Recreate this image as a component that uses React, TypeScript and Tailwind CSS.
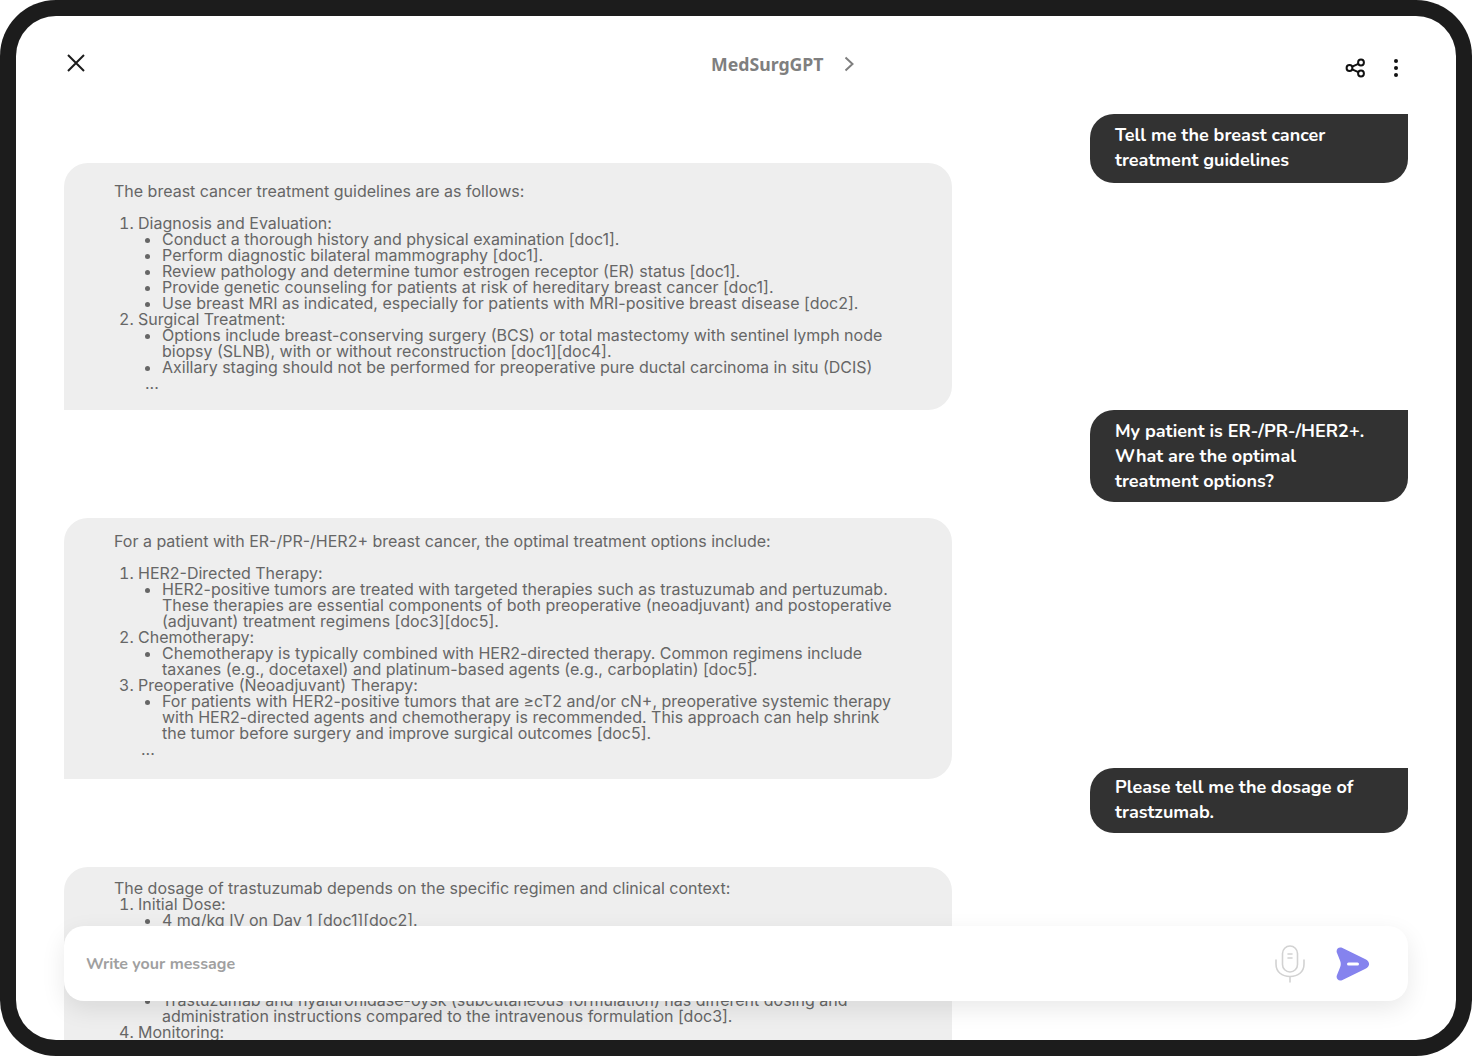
import React from "react";

const UserBubble = ({ children, className }: { children: React.ReactNode; className?: string }) => (
  <div
    className={`ml-auto w-[318px] rounded-[24px] rounded-tr-none bg-[#323232] px-[25px] font-['Nunito','Open_Sans',sans-serif] text-[18px] leading-[25px] font-bold text-white ${className ?? ""}`}
  >
    {children}
  </div>
);

const BotBubble = ({ children, className }: { children: React.ReactNode; className?: string }) => (
  <div
    className={`w-[888px] rounded-[24px] rounded-bl-none bg-[#eeeeee] px-[50px] font-['Inter',sans-serif] text-[16px] leading-4 text-[#666666] ${className ?? ""}`}
  >
    {children}
  </div>
);

const Ol = ({ children, start }: { children: React.ReactNode; start?: number }) => (
  <ol start={start} className="list-decimal pl-6">
    {children}
  </ol>
);

const Ul = ({ children }: { children: React.ReactNode }) => <ul className="list-disc pl-6">{children}</ul>;

export default function App() {
  return (
    <div className="h-[1056px] w-[1472px] overflow-hidden rounded-[56px] bg-[#1c1c1c] p-4">
      <div className="relative h-full w-full overflow-hidden rounded-[40px] bg-white">
        <header className="flex h-[98px] items-start pt-[38px] pr-[57px] pl-[51px]">
          <svg width="18" height="18" viewBox="0 0 18 18" fill="none" stroke="#1c1c1c" strokeWidth="2" className="shrink-0">
            <path d="M1 1l16 16M17 1L1 17" />
          </svg>
          <div className="ml-[626px] flex h-5 items-center font-['Noto_Sans',sans-serif] text-[17.7px] font-bold text-[#7f7f7f]">
            MedSurgGPT
            <svg width="10" height="16" viewBox="0 0 10 16" fill="none" stroke="#7f7f7f" strokeWidth="2" className="ml-[20px]">
              <path d="M1.5 1.5L8.5 8l-7 6.5" />
            </svg>
          </div>
          <div className="ml-auto flex items-center pt-[3px]">
            <svg width="22" height="22" viewBox="0 0 22 22" fill="none" stroke="#111111" strokeWidth="2">
              <circle cx="17" cy="5.5" r="2.9" />
              <circle cx="5.5" cy="11" r="2.9" />
              <circle cx="17" cy="16.5" r="2.9" />
              <path d="M8.2 9.7l6.1-2.9M8.2 12.3l6.1 2.9" />
            </svg>
            <svg width="6" height="20" viewBox="0 0 6 20" fill="#111111" className="ml-[27px]">
              <circle cx="3" cy="3" r="2" />
              <circle cx="3" cy="10" r="2" />
              <circle cx="3" cy="17" r="2" />
            </svg>
          </div>
        </header>

        <main className="px-12">
          <UserBubble className="pt-[9px] pb-[10px]">
            Tell me the breast cancer
            <br />
            treatment guidelines
          </UserBubble>

          <BotBubble className="relative mt-[-20px] pt-5 pb-[19px]">
            <p className="mb-4">The breast cancer treatment guidelines are as follows:</p>
            <Ol>
              <li>
                Diagnosis and Evaluation:
                <Ul>
                  <li>Conduct a thorough history and physical examination [doc1].</li>
                  <li>Perform diagnostic bilateral mammography [doc1].</li>
                  <li>Review pathology and determine tumor estrogen receptor (ER) status [doc1].</li>
                  <li>Provide genetic counseling for patients at risk of hereditary breast cancer [doc1].</li>
                  <li>Use breast MRI as indicated, especially for patients with MRI-positive breast disease [doc2].</li>
                </Ul>
              </li>
              <li>
                Surgical Treatment:
                <Ul>
                  <li>
                    Options include breast-conserving surgery (BCS) or total mastectomy with sentinel lymph node biopsy
                    (SLNB), with or without reconstruction [doc1][doc4].
                  </li>
                  <li>Axillary staging should not be performed for preoperative pure ductal carcinoma in situ (DCIS)</li>
                </Ul>
              </li>
            </Ol>
            <p className="pl-[31px]">...</p>
          </BotBubble>

          <UserBubble className="pt-[9px] pb-2">
            My patient is ER-/PR-/HER2+.
            <br />
            What are the optimal
            <br />
            treatment options?
          </UserBubble>

          <BotBubble className="mt-4 pt-[15px] pb-[22px]">
            <p className="mb-4">For a patient with ER-/PR-/HER2+ breast cancer, the optimal treatment options include:</p>
            <Ol>
              <li>
                HER2-Directed Therapy:
                <Ul>
                  <li>
                    HER2-positive tumors are treated with targeted therapies such as trastuzumab and pertuzumab. These
                    therapies are essential components of both preoperative (neoadjuvant) and postoperative (adjuvant)
                    treatment regimens [doc3][doc5].
                  </li>
                </Ul>
              </li>
              <li>
                Chemotherapy:
                <Ul>
                  <li>
                    Chemotherapy is typically combined with HER2-directed therapy. Common regimens include taxanes (e.g.,
                    docetaxel) and platinum-based agents (e.g., carboplatin) [doc5].
                  </li>
                </Ul>
              </li>
              <li>
                Preoperative (Neoadjuvant) Therapy:
                <Ul>
                  <li>
                    For patients with HER2-positive tumors that are ≥cT2 and/or cN+, preoperative systemic therapy with
                    HER2-directed agents and chemotherapy is recommended. This approach can help shrink the tumor before
                    surgery and improve surgical outcomes [doc5].
                  </li>
                </Ul>
              </li>
            </Ol>
            <p className="pl-[27px]">...</p>
          </BotBubble>

          <UserBubble className="relative mt-[-11px] pt-[7px] pb-2">
            Please tell me the dosage of
            <br />
            trastzumab.
          </UserBubble>

          <BotBubble className="mt-[34px] pt-[13px] pb-10">
            <p>The dosage of trastuzumab depends on the specific regimen and clinical context:</p>
            <Ol>
              <li>
                Initial Dose:
                <Ul>
                  <li>4 mg/kg IV on Day 1 [doc1][doc2].</li>
                </Ul>
              </li>
              <li>
                Maintenance Dose:
                <Ul>
                  <li>2 mg/kg IV weekly [doc1][doc2].</li>
                  <li>6 mg/kg IV every 3 weeks [doc1][doc2].</li>
                </Ul>
              </li>
              <li>
                Special Considerations:
                <Ul>
                  <li>
                    Trastuzumab and hyaluronidase-oysk (subcutaneous formulation) has different dosing and administration
                    instructions compared to the intravenous formulation [doc3].
                  </li>
                </Ul>
              </li>
              <li>Monitoring:</li>
            </Ol>
          </BotBubble>
        </main>

        <div className="absolute top-[910px] left-12 flex h-[75px] w-[1344px] items-center rounded-[20px] bg-white pr-[38px] pl-[22px] shadow-[0_8px_24px_rgba(0,0,0,0.09)]">
          <span className="font-['Nunito','Open_Sans',sans-serif] text-[16px] font-bold text-[#a0a0a0]">
            Write your message
          </span>
          <svg width="30" height="38" viewBox="0 0 30 38" fill="none" stroke="#d2d2d2" strokeWidth="1.6" strokeLinecap="round" className="ml-auto">
            <rect x="7.5" y="1" width="15" height="26" rx="7.5" />
            <path d="M1 15v4c0 8 6 12.5 14 12.5S29 27 29 19v-4M15 31.5V37M13 9h4M13 13h4" />
          </svg>
          <svg width="34" height="34" viewBox="0 0 34 34" className="ml-[31px]">
            <path
              d="M6.5 1L29 12C34.5 14.8 34.5 19.2 29 22L6.5 33C2.5 34.8 -0.5 31.5 1 28L4 20.5C5 18 5 16 4 13.5L1 6C-0.5 2.5 2.5 -0.8 6.5 1Z"
              fill="#8583ee"
            />
            <rect x="11" y="15.5" width="12" height="3" rx="1.5" fill="#ffffff" />
          </svg>
        </div>
      </div>
    </div>
  );
}
